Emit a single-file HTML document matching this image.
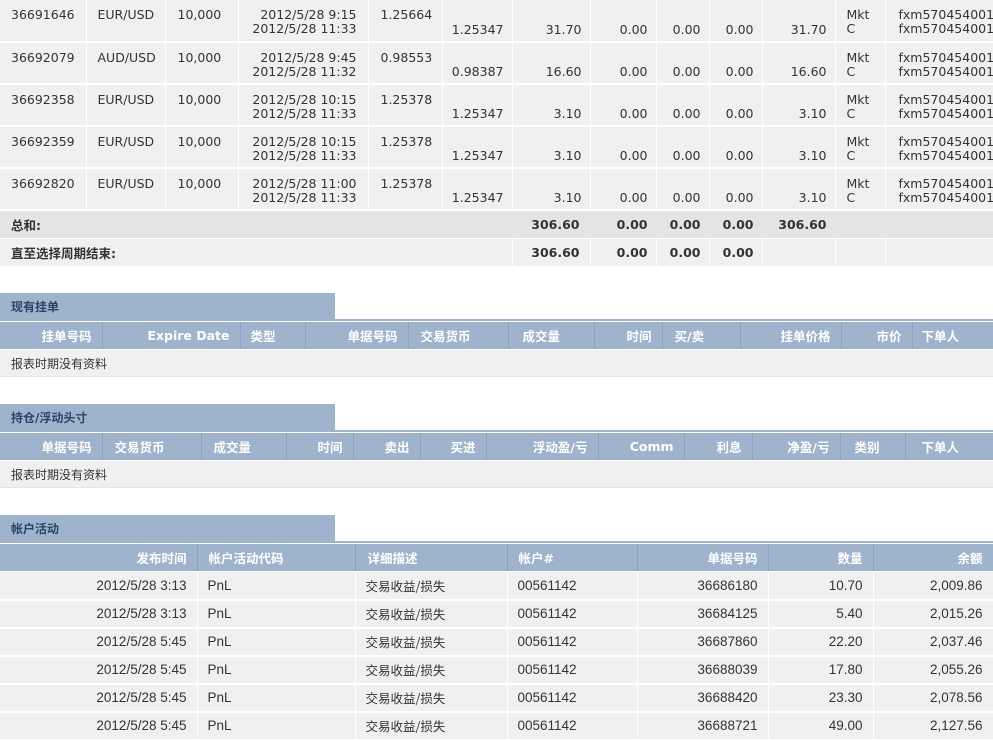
<!DOCTYPE html>
<html><head><meta charset="utf-8"><style>
*{margin:0;padding:0;box-sizing:border-box}
body{width:993px;height:738px;overflow:hidden;background:#fff;font-family:"DejaVu Sans","Noto Sans CJK SC",sans-serif;font-size:12.5px;color:#333;position:relative}
table{border-collapse:collapse;table-layout:fixed;position:absolute;left:0}
td{overflow:hidden;white-space:nowrap}
.top td{background:#f0f0f0;border-right:1px solid #fff;border-bottom:2px solid #fff;height:42px;vertical-align:top;line-height:14px;padding-top:8px}
.top td.b{vertical-align:bottom;padding-top:0;padding-bottom:4px;text-align:right;padding-right:8px}
.r{text-align:right}
.sum td{font-weight:bold;height:27px;background:#e4e4e4;vertical-align:middle;border-right:1px solid #e4e4e4;border-bottom:1px solid #fff}
.sum2 td{background:#f0f0f0;border-right:1px solid #fff}
.bar{position:absolute;left:0;width:335px;height:27px;background:#9fb3cc;color:#2a4468;font-weight:bold;font-size:12px;padding:5px 0 0 11px}
.line{position:absolute;left:0;width:993px;height:2px;background:#9fb3cc}
.hd td{background:#9fb3cc;color:#fff;font-weight:bold;font-size:12.5px;height:27px;border-right:1px solid #8ca1bd;text-align:right;padding-right:10px}
.nd{position:absolute;left:0;width:993px;height:27px;background:#f0f0f0;font-size:12px;padding:5px 0 0 11px;border-bottom:1px solid #e6e6e6}
.act td{font-family:"Liberation Sans","Noto Sans CJK SC",sans-serif;font-size:13.5px;line-height:16px;background:#f0f0f0;height:28px;border-right:1px solid #fff;border-bottom:2px solid #fff;padding:0 10px;vertical-align:middle}
.act td.c{font-family:"Noto Sans CJK SC",sans-serif;font-size:12.5px;line-height:16px}
</style></head><body>

<table class="top" style="top:0;width:993px">
<colgroup><col style="width:86px"><col style="width:79px"><col style="width:73px"><col style="width:130px"><col style="width:74px"><col style="width:70px"><col style="width:78px"><col style="width:66px"><col style="width:53px"><col style="width:53px"><col style="width:73px"><col style="width:50px"><col style="width:108px"></colgroup>
<tr><td style="padding-left:11px">36691646</td><td style="padding-left:11px">EUR/USD</td><td style="padding-left:12px">10,000</td><td class="r" style="padding-right:11px">2012/5/28 9:15<br>2012/5/28 11:33</td><td style="padding-left:12px">1.25664</td><td class="b">1.25347</td><td class="b">31.70</td><td class="b">0.00</td><td class="b">0.00</td><td class="b">0.00</td><td class="b">31.70</td><td style="padding-left:11px">Mkt<br>C</td><td style="padding-left:13px">fxm570454001<br>fxm570454001</td></tr>
<tr><td style="padding-left:11px">36692079</td><td style="padding-left:11px">AUD/USD</td><td style="padding-left:12px">10,000</td><td class="r" style="padding-right:11px">2012/5/28 9:45<br>2012/5/28 11:32</td><td style="padding-left:12px">0.98553</td><td class="b">0.98387</td><td class="b">16.60</td><td class="b">0.00</td><td class="b">0.00</td><td class="b">0.00</td><td class="b">16.60</td><td style="padding-left:11px">Mkt<br>C</td><td style="padding-left:13px">fxm570454001<br>fxm570454001</td></tr>
<tr><td style="padding-left:11px">36692358</td><td style="padding-left:11px">EUR/USD</td><td style="padding-left:12px">10,000</td><td class="r" style="padding-right:11px">2012/5/28 10:15<br>2012/5/28 11:33</td><td style="padding-left:12px">1.25378</td><td class="b">1.25347</td><td class="b">3.10</td><td class="b">0.00</td><td class="b">0.00</td><td class="b">0.00</td><td class="b">3.10</td><td style="padding-left:11px">Mkt<br>C</td><td style="padding-left:13px">fxm570454001<br>fxm570454001</td></tr>
<tr><td style="padding-left:11px">36692359</td><td style="padding-left:11px">EUR/USD</td><td style="padding-left:12px">10,000</td><td class="r" style="padding-right:11px">2012/5/28 10:15<br>2012/5/28 11:33</td><td style="padding-left:12px">1.25378</td><td class="b">1.25347</td><td class="b">3.10</td><td class="b">0.00</td><td class="b">0.00</td><td class="b">0.00</td><td class="b">3.10</td><td style="padding-left:11px">Mkt<br>C</td><td style="padding-left:13px">fxm570454001<br>fxm570454001</td></tr>
<tr><td style="padding-left:11px">36692820</td><td style="padding-left:11px">EUR/USD</td><td style="padding-left:12px">10,000</td><td class="r" style="padding-right:11px">2012/5/28 11:00<br>2012/5/28 11:33</td><td style="padding-left:12px">1.25378</td><td class="b">1.25347</td><td class="b">3.10</td><td class="b">0.00</td><td class="b">0.00</td><td class="b">0.00</td><td class="b">3.10</td><td style="padding-left:11px">Mkt<br>C</td><td style="padding-left:13px">fxm570454001<br>fxm570454001</td></tr>
</table>

<table class="sum" style="top:211px;width:993px">
<colgroup><col style="width:512px"><col style="width:78px"><col style="width:66px"><col style="width:53px"><col style="width:53px"><col style="width:73px"><col style="width:50px"><col style="width:108px"></colgroup>
<tr><td style="padding-left:11px">总和:</td><td class="r" style="padding-right:10px">306.60</td><td class="r" style="padding-right:8px">0.00</td><td class="r" style="padding-right:8px">0.00</td><td class="r" style="padding-right:8px">0.00</td><td class="r" style="padding-right:8px">306.60</td><td></td><td></td></tr>
</table>
<table class="sum sum2" style="top:239px;width:993px">
<colgroup><col style="width:512px"><col style="width:78px"><col style="width:66px"><col style="width:53px"><col style="width:53px"><col style="width:73px"><col style="width:50px"><col style="width:108px"></colgroup>
<tr><td style="padding-left:11px">直至选择周期结束:</td><td class="r" style="padding-right:10px">306.60</td><td class="r" style="padding-right:8px">0.00</td><td class="r" style="padding-right:8px">0.00</td><td class="r" style="padding-right:8px">0.00</td><td></td><td></td><td></td></tr>
</table>

<div class="bar" style="top:293px">现有挂单</div>
<div class="line" style="top:319px"></div>
<table class="hd" style="top:322px;width:993px">
<colgroup><col style="width:102px"><col style="width:138px"><col style="width:65px"><col style="width:103px"><col style="width:100px"><col style="width:86px"><col style="width:68px"><col style="width:78px"><col style="width:101px"><col style="width:71px"><col style="width:81px"></colgroup>
<tr><td>挂单号码</td><td>Expire Date</td><td style="text-align:left;padding-left:10px">类型</td><td>单据号码</td><td style="text-align:left;padding-left:12px">交易货币</td><td style="text-align:left;padding-left:14px">成交量</td><td>时间</td><td style="text-align:left;padding-left:12px">买/卖</td><td>挂单价格</td><td>市价</td><td style="text-align:left;padding-left:9px">下单人</td></tr>
</table>
<div class="nd" style="top:350px">报表时期没有资料</div>

<div class="bar" style="top:404px">持仓/浮动头寸</div>
<div class="line" style="top:430px"></div>
<table class="hd" style="top:433px;width:993px">
<colgroup><col style="width:102px"><col style="width:99px"><col style="width:85px"><col style="width:67px"><col style="width:67px"><col style="width:66px"><col style="width:112px"><col style="width:86px"><col style="width:68px"><col style="width:88px"><col style="width:65px"><col style="width:88px"></colgroup>
<tr><td>单据号码</td><td style="text-align:left;padding-left:12px">交易货币</td><td style="text-align:left;padding-left:12px">成交量</td><td>时间</td><td>卖出</td><td>买进</td><td>浮动盈/亏</td><td>Comm</td><td>利息</td><td>净盈/亏</td><td style="text-align:left;padding-left:14px">类别</td><td style="text-align:left;padding-left:16px">下单人</td></tr>
</table>
<div class="nd" style="top:461px">报表时期没有资料</div>

<div class="bar" style="top:515px">帐户活动</div>
<div class="line" style="top:541px"></div>
<table class="hd" style="top:544px;width:993px">
<colgroup><col style="width:197px"><col style="width:158px"><col style="width:152px"><col style="width:130px"><col style="width:131px"><col style="width:105px"><col style="width:120px"></colgroup>
<tr><td>发布时间</td><td style="text-align:left;padding-left:11px">帐户活动代码</td><td style="text-align:left;padding-left:12px">详细描述</td><td style="text-align:left;padding-left:11px">帐户#</td><td>单据号码</td><td>数量</td><td>余额</td></tr>
</table>
<table class="act" style="top:572px;width:993px">
<colgroup><col style="width:197px"><col style="width:158px"><col style="width:152px"><col style="width:130px"><col style="width:131px"><col style="width:105px"><col style="width:120px"></colgroup>
<tr><td class="r">2012/5/28 3:13</td><td>PnL</td><td class="c">交易收益/损失</td><td>00561142</td><td class="r">36686180</td><td class="r">10.70</td><td class="r">2,009.86</td></tr>
<tr><td class="r">2012/5/28 3:13</td><td>PnL</td><td class="c">交易收益/损失</td><td>00561142</td><td class="r">36684125</td><td class="r">5.40</td><td class="r">2,015.26</td></tr>
<tr><td class="r">2012/5/28 5:45</td><td>PnL</td><td class="c">交易收益/损失</td><td>00561142</td><td class="r">36687860</td><td class="r">22.20</td><td class="r">2,037.46</td></tr>
<tr><td class="r">2012/5/28 5:45</td><td>PnL</td><td class="c">交易收益/损失</td><td>00561142</td><td class="r">36688039</td><td class="r">17.80</td><td class="r">2,055.26</td></tr>
<tr><td class="r">2012/5/28 5:45</td><td>PnL</td><td class="c">交易收益/损失</td><td>00561142</td><td class="r">36688420</td><td class="r">23.30</td><td class="r">2,078.56</td></tr>
<tr><td class="r">2012/5/28 5:45</td><td>PnL</td><td class="c">交易收益/损失</td><td>00561142</td><td class="r">36688721</td><td class="r">49.00</td><td class="r">2,127.56</td></tr>
</table>
</body></html>
